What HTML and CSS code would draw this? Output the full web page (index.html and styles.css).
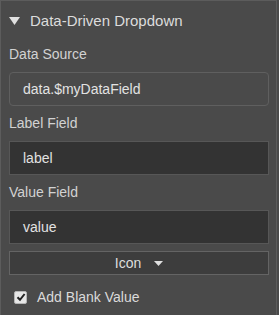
FILE: index.html
```html
<!DOCTYPE html>
<html>
<head>
<meta charset="utf-8">
<link rel="stylesheet" href="styles.css">
</head>
<body>
<div class="panel">
  <div class="header">
    <svg class="caret" width="11" height="8" viewBox="0 0 11 8"><path d="M0 0H11L5.5 8Z" fill="#e0e0e0"/></svg>
    <span class="title">Data-Driven Dropdown</span>
  </div>
  <div class="body">
    <div class="label">Data Source</div>
    <div class="input ghost">data.$myDataField</div>
    <div class="label">Label Field</div>
    <div class="input dark">label</div>
    <div class="label">Value Field</div>
    <div class="input dark">value</div>
    <div class="button">Icon<svg class="btn-caret" width="9" height="5" viewBox="0 0 9 5"><path d="M0 0H9L4.5 5Z" fill="#e0e0e0"/></svg></div>
    <div class="check-row">
      <span class="checkbox"><svg width="10" height="10" viewBox="0 0 10 10"><path d="M1.5 5.2L4 7.8L8.6 2" fill="none" stroke="#222" stroke-width="2"/></svg></span>
      <span class="check-label">Add Blank Value</span>
    </div>
  </div>
</div>
</body>
</html>
```
FILE: styles.css
```css
html, body {
  margin: 0;
  padding: 0;
  background: #4a4a4a;
}
body {
  font-family: "Liberation Sans", Arial, sans-serif;
  color: #d8d8d8;
}
.panel {
  width: 277px;
  height: 315px;
  box-sizing: border-box;
  border: 1px solid #5c5c5c;
  border-bottom: none;
  background: #4a4a4a;
}
.header {
  display: flex;
  align-items: center;
  height: 38px;
  padding-left: 8px;
  box-sizing: border-box;
}
.caret {
  margin-top: 1px;
}
.title {
  margin-left: 10px;
  font-size: 15px;
  color: #dcdcdc;
}
.body {
  padding: 5px 7px 0 8px;
  display: flex;
  flex-direction: column;
}
.label {
  font-size: 14px;
  line-height: 20px;
  color: #d2d2d2;
  margin-bottom: 8px;
}
.input {
  height: 34px;
  box-sizing: border-box;
  display: flex;
  align-items: center;
  padding-left: 13px;
  font-size: 14px;
  color: #e2e2e2;
  margin-bottom: 7px;
}
.ghost {
  border: 1px solid #5f5f5f;
  border-radius: 4px;
  background: #4a4a4a;
}
.dark {
  border: 1px solid #575757;
  background: #333333;
}
.button {
  height: 24px;
  box-sizing: border-box;
  border: 1px solid #646464;
  background: #3d3d3d;
  display: flex;
  align-items: center;
  justify-content: center;
  font-size: 14px;
  color: #dedede;
}
.btn-caret {
  margin-left: 13px;
  margin-top: 1px;
}
.check-row {
  display: flex;
  align-items: center;
  margin-top: 14px;
  padding-left: 5px;
}
.checkbox {
  width: 13px;
  height: 13px;
  box-sizing: border-box;
  background: #e6e6e6;
  border: 1px solid #b5b5b5;
  border-radius: 2px;
  display: flex;
  align-items: center;
  justify-content: center;
}
.check-label {
  margin-left: 10px;
  font-size: 14px;
  color: #dadada;
}
```
